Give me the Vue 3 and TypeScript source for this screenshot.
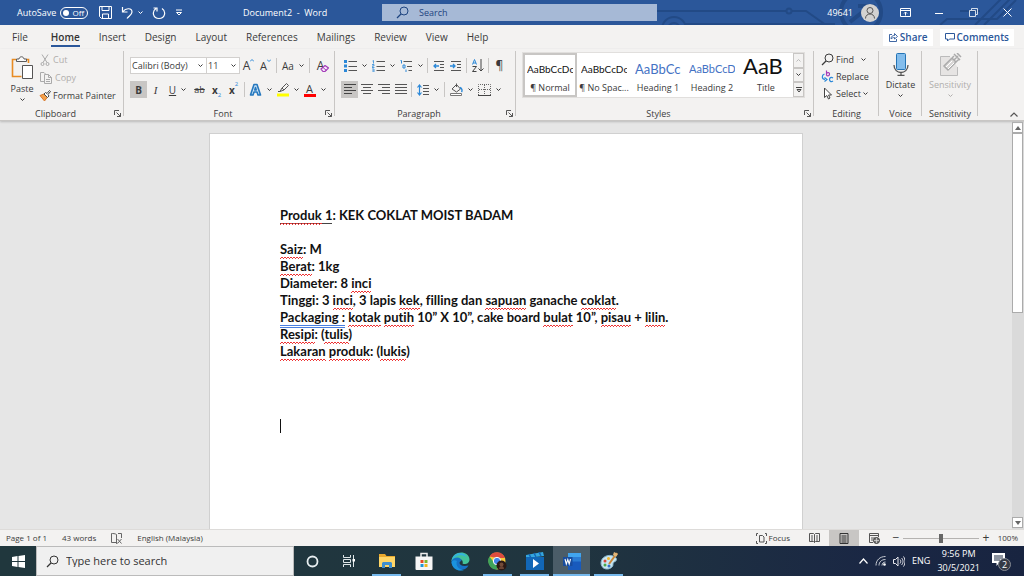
<script setup lang="ts">
import { h, ref } from 'vue'

const art: Record<string, [number, number, string]> = {
  save: [13, 13, '<path d="M.5 .5h12v12H2.500l-2-2zM3 .5v4h7v-4M3.500 12.500V8h6v4.500" fill="none" stroke="#fff"/>'],
  undo: [13, 13, '<path d="M1.500 1v5h5M2 5.500C5 1.500 11 2 11 6c0 2.500-3 4-5 6.500" fill="none" stroke="#fff" stroke-width="1.200"/>'],
  redo: [14, 14, '<path d="M4 2.500C-.5 5.500 1 12.500 7 12.500c6 0 7.500-7 3-10M1.500 2H5v3.500" fill="none" stroke="#fff" stroke-width="1.200"/>'],
  qat: [8, 7, '<path d="M1 1h6M1.500 3.500h5L4 6z" fill="none" stroke="#fff"/>'],
  lens: [13, 13, '<circle cx="8" cy="5" r="4" fill="none" stroke="currentColor"/><path d="M5 8 1 12" stroke="currentColor" stroke-width="1.300"/>'],
  user: [18, 18, '<circle cx="9" cy="9" r="9" fill="#d3d2d1"/><circle cx="9" cy="6.500" r="3" fill="none" stroke="#555"/><path d="M4.500 14.500c0-6 9-6 9 0" fill="none" stroke="#555"/>'],
  ribbonopt: [11, 9, '<path d="M.5 .5h10v8H.5zM.5 2.500h10M5.500 7.500V4M4 5.500 5.500 4 7 5.500" fill="none" stroke="#fff"/>'],
  min: [8, 8, '<path d="M0 4.500h8" stroke="#fff"/>'],
  restore: [9, 9, '<path d="M.5 2.500h6v6h-6zM2.500 2V.5h6v6H7" fill="none" stroke="#fff" stroke-width=".8"/>'],
  close: [9, 9, '<path d="m.5 .5 8 8M8.500 .5l-8 8" stroke="#fff"/>'],
  share: [10, 10, '<path d="M4 2.500H1.500v7h7V7M3 7c0-3 2-3.500 3.500-3.500V1.500L9.500 4.500 6.500 7V5.500C5 5.500 4 6 3 7z" fill="none" stroke="#2b579a" stroke-width=".9"/>'],
  comment: [10, 9, '<path d="M.5 .5h9v5.500H4.500L2.500 8V6h-2z" fill="none" stroke="#2b579a"/>'],
  paste: [24, 24, '<path d="M6 3.500H2.500v17h9M16 3.500h2.500V7" fill="none" stroke="#e88b23" stroke-width="1.600"/><path d="M6.500 5.500v-2.500h2.500c.5-3 4.500-3 5 0h2.500v2.500z" fill="#fafafa" stroke="#5b5b5b"/><path d="M12.500 9.500h10v13h-10z" fill="#fff" stroke="#555"/>'],
  cut: [10, 12, '<path d="m2 .5 5 8M8 .5l-5 8" stroke="#aaa"/><circle cx="2.500" cy="10" r="1.500" fill="none" stroke="#aaa"/><circle cx="7.500" cy="10" r="1.500" fill="none" stroke="#aaa"/>'],
  copy: [12, 12, '<path d="M4 9.500H.5v-9H4L5.500 2M4.500 2.500h4l3 3v6h-7zM8.500 2.500v3h3M6 7.500h4M6 9.500h4" fill="none" stroke="#aaa"/>'],
  painter: [12, 12, '<path d="M1 5.500 5.500 11l3-4-3.500-3z" fill="#f4a14b" stroke="#d8782c"/><path d="m5 4 1.500-1.500 1.500 1L10.500.5l1 1L9 4.500 10 6 8.500 7.500z" fill="#fff" stroke="#444"/>'],
  launch: [7, 7, '<path d="M.5 5V.5H5M2.500 2.500l4 4M6.500 3v3.500H3" fill="none" stroke="#555"/>'],
  caretup: [4, 3, '<path d="M0 2.500 2 .5 4 2.500" fill="none" stroke="#2b88d8"/>'],
  caretdn: [4, 3, '<path d="M0 .5 2 2.500 4 .5" fill="none" stroke="#2b88d8"/>'],
  eraser: [9, 7, '<path d="m1 4 4-3.500L8.500 3 5 6.500H3z" fill="#f7e9fb" stroke="#a33cb8" stroke-width="1.200"/><path d="m3 2.500 3.500 3" stroke="#a33cb8"/>'],
  glowA: [13, 13, '<path d="M1.500 12 5 1.500h3L11.500 12H9l-1-3H5l-1 3zM5.800 7h1.400L6.500 4.500z" fill="#cfe4f5" stroke="#2578be" stroke-width="1.600" stroke-linejoin="round"/>'],
  marker: [12, 14, '<path d="M3 8.500 5 5 9.500.5l2 2L7 7zM5 5l2 2M3 8.500H1" fill="none" stroke="#555"/><path d="M0 10.500h12v3H0z" fill="#ff0"/>'],
  bullets: [13, 12, '<path d="M0 0h3v3H0zM0 4.500h3v3H0zM0 9h3v3H0z" fill="#2b88d8"/><path d="M4.500 1.500H13M4.500 6.500H13M4.500 10.500H13" stroke="#555"/>'],
  numbers: [13, 12, '<path d="M.5 1 1.500.5v3M0 4.500h2v1.500H0v1.500h2.500M0 9h2v3H0M.5 10.500h1" fill="none" stroke="#2b88d8" stroke-width=".8"/><path d="M4.500 1.500H13M4.500 6.500H13M4.500 10.500H13" stroke="#555"/>'],
  multi: [13, 12, '<path d="M.5.5h1v3M3 5h2v3H3zM6 9.500v2.500" fill="none" stroke="#2b88d8"/><path d="M3.500 1.500H12M7 6.500h5M8.500 10.500H12" stroke="#555"/>'],
  outdent: [12, 10, '<path d="M1 .5h10M7 3.500h4M7 6.500h4M1 9.500h10" stroke="#555"/><path d="M6 5H1M3 3 1 5l2 2" fill="none" stroke="#2b88d8" stroke-width="1.300"/>'],
  indent: [12, 10, '<path d="M1 .5h10M7 3.500h4M7 6.500h4M1 9.500h10" stroke="#555"/><path d="M0 5h5M3 3l2 2-2 2" fill="none" stroke="#2b88d8" stroke-width="1.300"/>'],
  sort: [12, 13, '<path d="M.5 5.500 2.500.5l2 5M1 4h3" fill="none" stroke="#2b88d8"/><path d="M.5 7.500h4l-4 5h4M9 0v12M6.500 9.500 9 12l2.500-2.500" fill="none" stroke="#444"/>'],
  left: [12, 11, '<path d="M0 .5h12M0 3.500h8M0 6.500h12M0 9.500h8" stroke="#444"/>'],
  center: [12, 11, '<path d="M0 .5h12M2 3.500h8M0 6.500h12M2 9.500h8" stroke="#555"/>'],
  right: [12, 11, '<path d="M0 .5h12M4 3.500h8M0 6.500h12M4 9.500h8" stroke="#555"/>'],
  justify: [12, 11, '<path d="M0 .5h12M0 3.500h12M0 6.500h12M0 9.500h12" stroke="#555"/>'],
  spacing: [12, 12, '<path d="M2.500 1v10M.5 3.500 2.500 1l2 2.500M.5 8.500l2 2.500 2-2.500" fill="none" stroke="#2b88d8" stroke-width="1.200"/><path d="M6 1.500h6M6 4.500h6M6 7.500h6M6 10.500h6" stroke="#555"/>'],
  bucket: [13, 13, '<path d="m2 6 4.500-4.500L10.500 6 6.500 9zM6.500 4V.5" fill="none" stroke="#555"/><path d="M10 4.500c2 1 2.500 3 1.500 4.500" fill="none" stroke="#2b88d8" stroke-width="1.400"/><path d="M.5 10.500h11v2H.5z" fill="#fff" stroke="#777"/>'],
  borders: [13, 12, '<path d="M.5 11V.5h12V11M6.500 1v10M1 5.500h11" fill="none" stroke="#666" stroke-dasharray="1 1"/><path d="M0 11.500h13" stroke="#444"/>'],
  replace: [13, 13, '<path d="M5.500.5v5M5.500 3.500c1-1.500 3.500-1 3 1s-2.500 1.500-3 .5" fill="none" stroke="#a33cb8" stroke-width="1.200"/><path d="M12 8c-2-1.500-3.500 0-3.500 1.500S10 12.500 12 11M3.500 4C.5 5 .5 9 4 9.500M3.500 7.500 6 9.500l-2.500 2" fill="none" stroke="#2b88d8" stroke-width="1.200"/>'],
  pointer: [9, 13, '<path d="M1.500 1v9.500l2.300-2 1.700 3.500 1.500-1-1.500-3H8.500z" fill="#fff" stroke="#444"/>'],
  mic: [16, 23, '<path d="M1 12c0 10 14 10 14 0M8 19.500V22M4.500 22.500h7" fill="none" stroke="#555" stroke-width="1.300"/><rect x="3.500" y=".5" width="9" height="16" rx="1" fill="#83bdec" stroke="#2474b5"/>'],
  sens: [23, 23, '<path d="M11 3.500H1.500v19h17V14" fill="#e6e4e3" stroke="#bbb"/><path d="M5 13 13 5l4 4-8 8zM13 5l2-2M15 7l4-4M17 9l3-3M15 1l6 6M18 0l4 4" fill="#d8d6d5" stroke="#aaa" stroke-width="1.500"/><path d="m7 14 6-6M9 16l6-6" stroke="#fff"/>'],
  book: [11, 11, '<path d="M5.500 10.500V1.500C4 .5 2 .5.5.5v9h4.500l.5 1 .5-1M7 .5h3.500V5M6.500 6l4 4.500M10.500 6l-4 4.500" fill="none" stroke="#666"/>'],
  focus: [11, 11, '<path d="M.5 3V.5H2M9 .5h1.500V3M.5 8v2.500H2M9 10.500h1.500V8M3.500 2.500h3l1.500 1.500v5h-4.500z" fill="none" stroke="#555"/>'],
  read: [11, 10, '<path d="M5.500 9.500V1.500L4.500.5h-4v8h4l1 1 1-1h4v-8h-4l-1 1M2 3h2M2 5h2M2 7h2M7 3h2M7 5h2M7 7h2" fill="none" stroke="#555"/>'],
  print: [10, 11, '<path d="M1 .5h8v10H1zM2.500 3h5M2.500 5h5M2.500 7h5M2.500 9h5" fill="none" stroke="#333"/>'],
  web: [11, 11, '<path d="M.5 9.500v-9h9V4M.5 2.500h9M2 5h4M2 7h2M.5 9.500H4" fill="none" stroke="#555"/><circle cx="7.500" cy="7.500" r="3" fill="#777" stroke="#444"/><path d="M5 7.500h5M7.500 5v5" stroke="#ddd" stroke-width=".7"/>'],
  win: [13, 13, '<path d="M0 2 5.500 1v5H0zM6.500.9 13 0v6H6.500zM0 7h5.500v5L0 11zM6.500 7H13v6l-6.500-.9z" fill="#fff"/>'],
  cortana: [13, 13, '<circle cx="6.500" cy="6.500" r="5" fill="none" stroke="#e8eef0" stroke-width="1.800"/>'],
  task: [13, 12, '<path d="M.5 0v2.500h7V0M.5 12V9.500h7V12M.5 4.500h7v3h-7zM10.500 0v12" fill="none" stroke="#dfe6e8"/><path d="M9.500 4h2.500v2.500H9.500z" fill="#fff"/>'],
  explorer: [18, 16, '<path d="M1 1h6l1.500 2H17v11H1z" fill="#e9a92e"/><path d="M1 4h16v10H1z" fill="#ffd667"/><path d="M4 15v-5l1-1h8l1 1v5h-3v-3H7v3z" fill="#3f8fcf"/>'],
  store: [18, 18, '<path d="M6 5V1.500h6V5" fill="none" stroke="#eee" stroke-width="1.500"/><path d="M.5 4.500h17V17a1 1 0 0 1-1 1h-15a1 1 0 0 1-1-1z" fill="#f6f6f6"/><path d="M5.500 8H8.500v3H5.500z" fill="#e74a25"/><path d="M9.500 8h3v3h-3z" fill="#7db72f"/><path d="M5.500 12h3v3h-3z" fill="#2196d6"/><path d="M9.500 12h3v3h-3z" fill="#f2b51d"/>'],
  edge: [19, 19, '<path d="M.5 9C1.500-2 18-2 18.500 7.500c0 4-4.500 5.500-7 4 1.500-4-4-7-11-2.500z" fill="#43c39a"/><path d="M.5 9C2-1 14-1 15.500 5 10 1.500 4 3 .5 9z" fill="#35b3dd"/><path d="M.5 9c3-5 10-4 10 0-4 1-2 6.500 7 4.500C14 20.500.5 20 .5 9z" fill="#1672c6"/><path d="M6 9c-2 4 2 9 7 9-6 2-12-1.500-12.500-8C2 8 4 7.500 6 9z" fill="#1b93df"/>'],
  chrome: [19, 19, '<circle cx="9" cy="9" r="8.500" fill="#f7cb3b"/><path d="M1.500 4.500A8.500 8.500 0 0 1 17 6H9z" fill="#dd4b3e"/><path d="M1.500 4.500A8.500 8.500 0 0 0 9 17.500l3-6-6-1z" fill="#3fa45a"/><circle cx="9" cy="9" r="3.700" fill="#4285e8" stroke="#fff"/><circle cx="13.500" cy="13.500" r="5" fill="#2c1915"/><circle cx="13.500" cy="12.500" r="2" fill="#744b38"/><path d="M11 17c0-4 5-4 5 0" fill="#6b4434"/>'],
  movies: [18, 18, '<path d="M0 3 17 0l1 4L0 6z" fill="#35a7df"/><path d="M0 5h18v13H0z" fill="#1267b7"/><path d="m3 2 2 4M8 1l2 4M13 0l2 4" stroke="#1267b7" stroke-width="1.500"/><path d="m7 7 6 4.500L7 16z" fill="#fff"/>'],
  word: [18, 17, '<path d="M5 0h13v17H5z" fill="#2b7cd3"/><path d="M5 0h13v4H5z" fill="#41a5ee"/><path d="M5 8.500h13V17H5z" fill="#185abd"/><path d="M0 4h9.500v9H0z" fill="#184d9e"/><path d="m2 6 1.300 5 1.500-4.500L6.200 11l1.300-5" fill="none" stroke="#fff" stroke-width="1.100"/>'],
  paint: [18, 18, '<path d="M1 11C1 5 8 2 13 4c5 2 4 5 1 6-2 1 0 3-2 5-4 4-11 2-11-4z" fill="#c8e6f2" stroke="#88b5c9"/><circle cx="5" cy="9" r="1.500" fill="#d94739"/><circle cx="8.500" cy="6.500" r="1.500" fill="#f2b52b"/><circle cx="5" cy="13" r="1.500" fill="#49a84c"/><circle cx="9" cy="14" r="1.500" fill="#3470c6"/><path d="M17 1 9 12" stroke="#c98638" stroke-width="2"/><path d="m14 0 4 2-2 3-3-2z" fill="#e2b678"/>'],
  trayup: [9, 6, '<path d="M.5 5.500 4.500 1l4 4.500" fill="none" stroke="#fff" stroke-width="1.200"/>'],
  wifi: [11, 10, '<path d="M1 9.500C1 4 5 .5 10.500.5M4 9.500C4 6 6.500 3.500 10.500 3.500M7 9.500c0-2 1.500-3.500 3.500-3.500" fill="none" stroke="#c8ccd4"/><circle cx="9.500" cy="8.500" r="1.300" fill="#fff"/>'],
  sound: [12, 11, '<path d="M.5 3.500h2L5 1v9L2.500 7.500h-2zM7 3.500c1 1 1 3 0 4M8.500 2c2 2 2 5 0 7M10.500.5c2 3 2 7 0 10" fill="none" stroke="#e8e8ee"/>'],
  notify: [19, 19, '<path d="M0 1h13v10H7l-2.500 3v-3H0z" fill="#fff"/><path d="M2 4h9M2 6h9M2 8h6" stroke="#1c2b42"/><circle cx="12.500" cy="12.500" r="6" fill="#343a45" stroke="#858a94"/>'],
  up: [6, 4, '<path d="M0 4 3 0l3 4z" fill="currentColor"/>'],
  down: [6, 4, '<path d="m0 0 3 4 3-4z" fill="currentColor"/>'],
  chev: [5, 4, '<path d="M.5 .5 2.500 2.500 4.500 .5" fill="none" stroke="currentColor"/>'],
  collapse: [8, 5, '<path d="M.5 4.500 4 1l3.500 3.500" fill="none" stroke="#555" stroke-width="1.200"/>'],
  more: [6, 6, '<path d="M0 .5h6M1 2.500h4L3 5z" fill="none" stroke="#444"/>'],
}

const Ic = (p: { n: string }) => {
  const [w, t, body] = art[p.n]
  return h('svg', { width: w, height: t, viewBox: `0 0 ${w} ${t}`, 'aria-hidden': 'true', innerHTML: body })
}
Ic.props = ['n']

const tabs = ['File', 'Home', 'Insert', 'Design', 'Layout', 'References', 'Mailings', 'Review', 'View', 'Help']
const styles = [
  { sample: 'AaBbCcDc', label: '¶ Normal', cls: 'body' },
  { sample: 'AaBbCcDc', label: '¶ No Spac...', cls: 'body' },
  { sample: 'AaBbCc', label: 'Heading 1', cls: 'h1' },
  { sample: 'AaBbCcD', label: 'Heading 2', cls: 'h2' },
  { sample: 'AaB', label: 'Title', cls: 'title' },
]
// mark: s = spelling, g = grammar
type Run = [string, string?]
const lines: Run[][] = [
  [['Saiz', 's'], [': M']],
  [['Berat', 's'], [': 1kg']],
  [['Diameter: 8 '], ['inci', 's']],
  [['Tinggi: 3 '], ['inci', 's'], [', 3 lapis '], ['kek', 's'], [', filling dan '], ['sapuan', 's'], [' ganache '], ['coklat', 's'], ['.']],
  [['Packaging :', 'g'], [' '], ['kotak', 's'], [' '], ['putih', 's'], [' 10” X 10”, cake board '], ['bulat', 's'], [' 10”, '], ['pisau', 's'], [' + '], ['lilin', 's'], ['.']],
  [['Resipi', 's'], [': ('], ['tulis', 's'], [')']],
  [['Lakaran', 's'], [' '], ['produk', 's'], [': ('], ['lukis', 's'], [')']],
]
const apps = [
  { n: 'cortana', t: 'Cortana' }, { n: 'task', t: 'Task View' }, { n: 'explorer', t: 'File Explorer', run: true },
  { n: 'store', t: 'Store' }, { n: 'edge', t: 'Edge' }, { n: 'chrome', t: 'Chrome', run: true },
  { n: 'movies', t: 'Movies', run: true }, { n: 'word', t: 'Word', run: true, on: true }, { n: 'paint', t: 'Paint', run: true },
]
const zoom = ref(50)
</script>

<template>
  <div class="screen">
    <header class="titlebar">
      <svg class="circuit" viewBox="0 0 374 25" preserveAspectRatio="xMaxYMid slice" aria-hidden="true">
        <g fill="none" stroke="#224a86" stroke-width="2">
          <path d="M7 11h129M142 11h14l20 14M35 24h150" /><circle cx="139" cy="11" r="2.500" />
          <circle cx="24" cy="29" r="12" /><circle cx="24" cy="29" r="6" /><circle cx="211" cy="12" r="20" stroke-width="4" /><path d="m200 22 20-16h-12M220 6v12" stroke-width="4" />
          <path d="m290 25 7-6h50l19-19M325 25l28-28M334 25l28-28M310 11h20" />
        </g>
      </svg>
      <div class="quick">
        <label class="autosave">AutoSave <input type="checkbox" role="switch" /><span class="pill">Off</span></label>
        <button aria-label="Save"><Ic n="save" /></button>
        <button class="undo" aria-label="Undo"><Ic n="undo" /><Ic n="chev" /></button>
        <button aria-label="Repeat"><Ic n="redo" /></button>
        <button aria-label="Customize"><Ic n="qat" /></button>
      </div>
      <div class="docname">Document2&nbsp; -&nbsp; Word</div>
      <label class="find"><Ic n="lens" /><input type="text" placeholder="Search" aria-label="Search" /></label>
      <div class="account">
        <span>49641</span><Ic n="user" class="avatar" />
        <button aria-label="Ribbon options"><Ic n="ribbonopt" /></button>
        <button aria-label="Minimize"><Ic n="min" /></button>
        <button aria-label="Restore"><Ic n="restore" /></button>
        <button aria-label="Close"><Ic n="close" /></button>
      </div>
    </header>

    <nav class="tabs">
      <button v-for="t in tabs" :key="t" :class="{ on: t === 'Home' }">{{ t }}</button>
      <div class="actions">
        <button><Ic n="share" />Share</button>
        <button><Ic n="comment" />Comments</button>
      </div>
    </nav>

    <section class="ribbon">
      <div class="group">
        <div class="clip">
          <button class="big"><Ic n="paste" />Paste<Ic n="chev" /></button>
          <div class="stack">
            <button class="off"><Ic n="cut" />Cut</button>
            <button class="off"><Ic n="copy" />Copy</button>
            <button><Ic n="painter" />Format Painter</button>
          </div>
        </div>
        <div class="cap launch">Clipboard<button aria-label="Clipboard settings"><Ic n="launch" /></button></div>
      </div>

      <div class="group">
        <div class="rows">
          <div class="row">
            <span class="combo name"><select aria-label="Font"><option>Calibri (Body)</option></select><Ic n="chev" /></span>
            <span class="combo size"><select aria-label="Font size"><option>11</option></select><Ic n="chev" /></span>
            <button class="w17 grow">A<Ic n="caretup" /></button>
            <button class="w17 grow small">A<Ic n="caretdn" /></button>
            <i class="sep" />
            <button class="w28 case">Aa<Ic n="chev" /></button>
            <i class="sep" />
            <button class="w17 clear" aria-label="Clear formatting">A<Ic n="eraser" /></button>
          </div>
          <div class="row">
            <button class="w17 pressed"><b>B</b></button>
            <button class="w17"><em>I</em></button>
            <button class="w27 under"><u>U</u><Ic n="chev" /></button>
            <button class="w17"><s>ab</s></button>
            <button class="w17 script"><b>x</b><sub>2</sub></button>
            <button class="w17 script"><b>x</b><sup>2</sup></button>
            <i class="sep" />
            <button class="w27" aria-label="Text effects"><Ic n="glowA" /><Ic n="chev" /></button>
            <button class="w27" aria-label="Highlight"><Ic n="marker" /><Ic n="chev" /></button>
            <button class="w27"><span class="colorA">A</span><Ic n="chev" /></button>
          </div>
        </div>
        <div class="cap launch">Font<button aria-label="Font settings"><Ic n="launch" /></button></div>
      </div>

      <div class="group">
        <div class="rows">
          <div class="row">
            <button class="w28" aria-label="Bullets"><Ic n="bullets" /><Ic n="chev" /></button>
            <button class="w28" aria-label="Numbering"><Ic n="numbers" /><Ic n="chev" /></button>
            <button class="w28" aria-label="Multilevel list"><Ic n="multi" /><Ic n="chev" /></button>
            <i class="sep" />
            <button class="w17" aria-label="Decrease indent"><Ic n="outdent" /></button>
            <button class="w17" aria-label="Increase indent"><Ic n="indent" /></button>
            <i class="sep" />
            <button class="w17" aria-label="Sort"><Ic n="sort" /></button>
            <i class="sep" />
            <button class="w17 pil">¶</button>
          </div>
          <div class="row">
            <button class="w17 pressed" aria-label="Align left"><Ic n="left" /></button>
            <button class="w17" aria-label="Center"><Ic n="center" /></button>
            <button class="w17" aria-label="Align right"><Ic n="right" /></button>
            <button class="w17" aria-label="Justify"><Ic n="justify" /></button>
            <i class="sep" />
            <button class="w28" aria-label="Line spacing"><Ic n="spacing" /><Ic n="chev" /></button>
            <i class="sep" />
            <button class="w28" aria-label="Shading"><Ic n="bucket" /><Ic n="chev" /></button>
            <button class="w28" aria-label="Borders"><Ic n="borders" /><Ic n="chev" /></button>
          </div>
        </div>
        <div class="cap launch">Paragraph<button aria-label="Paragraph settings"><Ic n="launch" /></button></div>
      </div>

      <div class="group">
        <div class="gallery">
          <button v-for="(s, i) in styles" :key="s.label" class="cell" :class="{ on: i === 0 }">
            <span class="sample" :class="s.cls">{{ s.sample }}</span><span>{{ s.label }}</span>
          </button>
          <div class="spin">
            <button class="dim" aria-label="Scroll up"><Ic n="chev" class="flip" /></button>
            <button aria-label="Scroll down"><Ic n="chev" /></button>
            <button aria-label="More"><Ic n="more" /></button>
          </div>
        </div>
        <div class="cap launch">Styles<button aria-label="Styles settings"><Ic n="launch" /></button></div>
      </div>

      <div class="group">
        <div class="stack edit">
          <button><Ic n="lens" />Find<Ic n="chev" class="far" /></button>
          <button><Ic n="replace" />Replace</button>
          <button><Ic n="pointer" class="ptr" />Select<Ic n="chev" /></button>
        </div>
        <div class="cap">Editing</div>
      </div>
      <div class="group">
        <button class="big"><Ic n="mic" />Dictate<Ic n="chev" /></button>
        <div class="cap">Voice</div>
      </div>
      <div class="group">
        <button class="big off"><Ic n="sens" />Sensitivity<Ic n="chev" /></button>
        <div class="cap">Sensitivity</div>
      </div>
      <button class="collapse" aria-label="Collapse ribbon"><Ic n="collapse" /></button>
    </section>

    <main class="work">
      <div class="canvas">
        <article class="page">
          <p><span class="title-u"><span class="s">Produk</span> 1</span>: KEK COKLAT MOIST BADAM</p>
          <p>&nbsp;</p>
          <p v-for="(l, i) in lines" :key="i"><span v-for="(r, j) in l" :key="j" :class="r[1]">{{ r[0] }}</span></p>
          <div class="caret"></div>
        </article>
      </div>
      <div class="scroll">
        <button aria-label="Scroll up"><Ic n="up" /></button>
        <div class="thumb"></div>
        <button aria-label="Scroll down"><Ic n="down" /></button>
      </div>
    </main>

    <footer class="status">
      <span>Page 1 of 1</span><span>43 words</span><Ic n="book" /><span>English (Malaysia)</span>
      <div class="views">
        <button class="focus"><Ic n="focus" />Focus</button>
        <button aria-label="Read mode"><Ic n="read" /></button>
        <button class="on" aria-label="Print layout"><Ic n="print" /></button>
        <button aria-label="Web layout"><Ic n="web" /></button>
        <button class="pm">−</button>
        <input v-model="zoom" type="range" min="0" max="100" aria-label="Zoom" />
        <button class="pm">+</button>
        <span class="pct">100%</span>
      </div>
    </footer>

    <div class="taskbar">
      <button class="start" aria-label="Start"><Ic n="win" /></button>
      <label class="search"><Ic n="lens" /><input type="text" placeholder="Type here to search" aria-label="Type here to search" /></label>
      <button v-for="a in apps" :key="a.n" class="app" :class="{ run: a.run, on: a.on }" :aria-label="a.t"><Ic :n="a.n" /></button>
      <div class="tray">
        <button aria-label="Hidden icons"><Ic n="trayup" /></button>
        <Ic n="wifi" /><Ic n="sound" />
        <span>ENG</span>
        <time>9:56 PM<br />30/5/2021</time>
        <button class="note" aria-label="Notifications"><Ic n="notify" /><span>2</span></button>
      </div>
    </div>
  </div>
</template>

<style>
body { margin: 0; }
</style>
<style scoped>
* { box-sizing: border-box; }
.screen { height: 100vh; display: grid; grid-template-rows: 25px 24px 72px 1fr 17px 30px; font: 9px/12px "Open Sans", "Noto Sans", sans-serif; color: #3b3b3b; background: #f3f2f1; overflow: hidden; }
button, input, select { font: inherit; color: inherit; border: 0; padding: 0; margin: 0; background: none; }
button { display: flex; align-items: center; justify-content: center; white-space: nowrap; }
svg { flex: none; }
input:focus { outline: none; }

.titlebar { position: relative; display: grid; grid-template-columns: 243px 139px minmax(100px, 275px) 1fr; align-items: center; background: #2b579a; color: #fff; }
.circuit { position: absolute; right: 0; top: 0; width: 374px; height: 25px; }
.quick { display: flex; align-items: center; gap: 9px; padding-left: 17px; }
.autosave { position: relative; display: flex; align-items: center; gap: 4px; margin-right: 2px; }
.autosave input { position: absolute; opacity: 0; }
.pill { display: flex; align-items: center; justify-content: center; width: 28px; height: 12px; border: 1px solid #fff; border-radius: 6px; font-size: 8px; gap: 4px; padding-right: 2px; }
.pill::before { content: ""; width: 6px; height: 6px; border-radius: 3px; background: #fff; }
.undo { gap: 4px; }
.find { z-index: 1; display: flex; align-items: center; gap: 10px; height: 17px; padding-left: 14px; background: #a6b9d6; color: #1e4480; }
.find input { flex: 1; min-width: 0; }
input::placeholder { color: inherit; opacity: 1; }
.account { z-index: 1; display: flex; align-items: center; justify-content: flex-end; }
.account span { margin-right: 8px; }
.account .avatar { margin-right: 9px; }
.account button { width: 34px; }

.tabs { display: flex; align-items: center; font-size: 10px; padding-left: 12px; gap: 19px; }
.tabs > button { position: relative; height: 24px; }
.tabs > button:first-child { margin-right: 4px; }
.tabs > .on { font-weight: 600; color: #333; }
.tabs > .on::after { content: ""; position: absolute; left: 0; right: 0; bottom: 2px; height: 2px; background: #2b579a; }
.actions { margin-left: auto; display: flex; gap: 7px; padding-right: 10px; }
.actions button { height: 17px; padding: 0 5px; gap: 2px; background: #fff; color: #2b579a; font-weight: 600; }

.ribbon { position: relative; display: grid; grid-template-columns: 124px 211px 181px 298px 65px 43px 56px 1fr; border-bottom: 1px solid #c8c6c4; box-shadow: 0 1px 2px #bbb; z-index: 1; }
.group { position: relative; display: flex; flex-direction: column; justify-content: space-between; padding-top: 2px; min-width: 0; }
.group::after { content: ""; position: absolute; right: 0; top: 2px; bottom: 4px; width: 1px; background: #c8c6c4; }
.cap { height: 12px; text-align: center; }
.cap.launch { padding-right: 13px; }
.cap button { position: absolute; right: 3px; bottom: 3px; }
.clip { display: flex; padding-left: 10px; }
.big { flex-direction: column; gap: 3px; padding-top: 2px; }
.off { color: #b0aeac; }
.stack { display: flex; flex-direction: column; align-items: flex-start; gap: 1px; padding-left: 5px; }
.stack button { gap: 2px; height: 17px; }
.stack .off svg:first-child { margin: 0 1px; }
.stack.edit { padding-left: 7px; gap: 0; }
.edit .ptr { margin: 0 2px; }
.edit .far { margin-left: 5px; }
.rows { display: flex; flex-direction: column; gap: 7px; padding: 6px 0 0 6px; }
.row { display: flex; align-items: center; height: 17px; }
.row button { height: 17px; }
.w17 { width: 17px; }
.w27 { width: 27px; gap: 5px; }
.w28 { width: 28px; gap: 5px; }
.sep { width: 1px; height: 15px; background: #c8c6c4; margin: 0 2px; }
.pressed { background: #c8c6c4; }
.combo { position: relative; display: flex; height: 17px; background: #fff; border: 1px solid #d2d0ce; }
.combo.name { width: 77px; }
.combo.size { width: 33px; border-left: 0; }
.combo select { appearance: none; width: 100%; padding-left: 1px; }
.combo svg { position: absolute; right: 3px; top: 6px; }
.grow { font-size: 12px; align-items: center; }
.grow svg { align-self: flex-start; margin-top: 2px; }
.grow.small { font-size: 11px; }
.case { font-size: 10px; }
.clear { position: relative; font-size: 12px; }
.clear svg { position: absolute; right: 0; bottom: 2px; }
.row em { font: italic 11px "Liberation Serif", serif; }
.row b, .row u { font-size: 10px; }
.script sub, .script sup { font-size: 6px; color: #2b88d8; line-height: 6px; }
.script sub { align-self: flex-end; }
.script sup { align-self: flex-start; }
.colorA { width: 12px; height: 14px; font-size: 11px; line-height: 11px; border-bottom: 3px solid #f00; }
.pil { font-size: 12px; }

.gallery { display: flex; margin: 1px 9px 0 6px; border: 1px solid #e1dfdd; background: #fff; height: 46px; }
.cell { flex: 1; min-width: 0; flex-direction: column; justify-content: flex-end; padding-bottom: 1px; border: 2px solid transparent; }
.cell.on { border-color: #c8c6c4; }
.sample { height: 28px; line-height: 28px; width: 46px; overflow: hidden; text-align: left; color: #111; font-family: Lato, sans-serif; }
.sample.body { font-size: 10px; }
.sample.h1 { font-size: 13px; color: #4472c4; }
.sample.h2 { font-size: 11px; color: #4472c4; }
.sample.title { font-size: 22px; line-height: 22px; overflow: visible; }
.spin { display: grid; width: 11px; grid-template-rows: repeat(3, 1fr); background: #f3f2f1; }
.spin button { border: 1px solid #c8c6c4; }
.spin .dim { color: #bbb; }
.flip { transform: rotate(180deg); }
.collapse { justify-self: end; align-self: end; margin: 0 6px 3px 0; }

.work { display: flex; min-height: 0; background: #e6e6e6; }
.canvas { flex: 1; display: flex; justify-content: center; padding-top: 12px; overflow: hidden; }
.page { width: 594px; background: #fff; border: 1px solid #d0d0d0; border-bottom: 0; padding: 73px 70px 0; font: 700 13px/17px Lato, "Open Sans", sans-serif; font-variant-ligatures: none; color: #111; }
p { margin: 0; white-space: nowrap; }
.s { padding-bottom: 2px; background: linear-gradient(90deg, #e33 1px, transparent 1px) 0 100% / 3px 1px repeat-x, linear-gradient(90deg, transparent 1px, #e33 1px) 0 calc(100% - 1px) / 3px 1px repeat-x; }
.g { border-bottom: 3px double #4a7fe0; }
.title-u { border-bottom: 1px solid #444; }
.caret { width: 1px; height: 14px; margin-top: 59px; background: #111; }
.scroll { width: 12px; display: flex; flex-direction: column; background: #dadada; padding: 1px 1px 1px 0; }
.scroll button { height: 11px; background: #fff; border: 1px solid #ababab; color: #666; }
.scroll .thumb { height: 180px; background: #fff; border: 1px solid #ababab; margin-bottom: auto; }

.status { display: flex; align-items: center; gap: 15px; padding: 0 6px; font-size: 8px; border-top: 1px solid #dddbd9; }
.views { margin-left: auto; display: flex; align-items: center; align-self: stretch; }
.views button { width: 30px; align-self: stretch; }
.views .focus { width: auto; gap: 2px; margin-right: 9px; }
.views .on { background: #c8c6c4; }
.views .pm { width: 14px; font-size: 12px; }
.views input { appearance: none; width: 76px; height: 9px; background: linear-gradient(#b5b3b1, #b5b3b1) center / 100% 1px no-repeat; }
.views input::-webkit-slider-thumb { appearance: none; width: 4px; height: 9px; background: #666; }
.pct { width: 25px; text-align: right; }

.taskbar { display: flex; background: linear-gradient(90deg, #20373d, #20353f 55%, #1a2744 85%, #182440); color: #fff; }
.start { width: 36px; }
.search { width: 258px; display: flex; align-items: center; gap: 7px; padding-left: 9px; background: #f0f0f0; border: 1px solid #bbb; color: #333; font-size: 11px; }
.search input { flex: 1; min-width: 0; }
.app { width: 37px; position: relative; }
.app.run::after { content: ""; position: absolute; left: 4px; right: 4px; bottom: 0; height: 2px; background: #76b9ed; }
.app.on { background: #4b5d68; }
.app.on::after { left: 0; right: 0; }
.tray { margin-left: auto; display: flex; align-items: center; gap: 7px; padding-right: 13px; }
.tray time { text-align: center; line-height: 14px; }
.note { position: relative; margin-left: 5px; }
.note span { position: absolute; left: 10px; top: 7px; }
</style>
